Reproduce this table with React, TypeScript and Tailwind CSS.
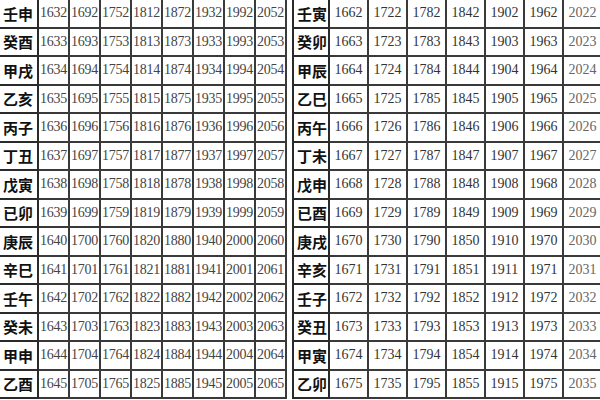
const leftNames = ["壬申", "癸酉", "甲戌", "乙亥", "丙子", "丁丑", "戊寅", "已卯", "庚辰", "辛巳", "壬午", "癸未", "甲申", "乙酉"];
const rightNames = ["壬寅", "癸卯", "甲辰", "乙巳", "丙午", "丁未", "戊申", "已酉", "庚戌", "辛亥", "壬子", "癸丑", "甲寅", "乙卯"];

const YearTable = ({ names, start, cols, nameW, colW, numClass }: {
  names: string[];
  start: number;
  cols: number;
  nameW: string;
  colW: string;
  numClass: string;
}) => {
  return (
    <table className="shrink-0 border-collapse border-2 border-[#2a2a2a] table-fixed">
      <tbody>
        {names.map((name, i) => (
          <tr key={name} className="h-[28.5px]">
            <td className={`${nameW} whitespace-nowrap border-2 border-[#2a2a2a] pl-[3px] text-[15px] font-semibold text-[#111] leading-none`}
              style={{ fontFamily: '"Noto Sans CJK SC", "Noto Sans", sans-serif' }}>
              {name}
            </td>
            {Array.from({ length: cols }).map((_, c) => (
              <td key={c} className={`${colW} whitespace-nowrap border-2 border-[#3a3a3a] text-center text-[14px] leading-none ${c === cols - 1 && cols === 7 ? "text-[#666]" : numClass}`}
                style={{ fontFamily: '"Liberation Serif", serif' }}>
                {start + i + c * 60}
              </td>
            ))}
          </tr>
        ))}
      </tbody>
    </table>
  );
};

export default function App() {
  return (
    <div className="w-[600px] h-[400px] overflow-hidden bg-white">
      <div className="flex items-start gap-[5px] -mt-[2px] -ml-[2px] w-max">
        <YearTable names={leftNames} start={1632} cols={8} nameW="w-[39px]" colW="w-[31px]" numClass="text-[#444] tracking-[-0.3px]" />
        <YearTable names={rightNames} start={1662} cols={7} nameW="w-[36px]" colW="w-[39px]" numClass="text-[#333]" />
      </div>
    </div>
  );
}
